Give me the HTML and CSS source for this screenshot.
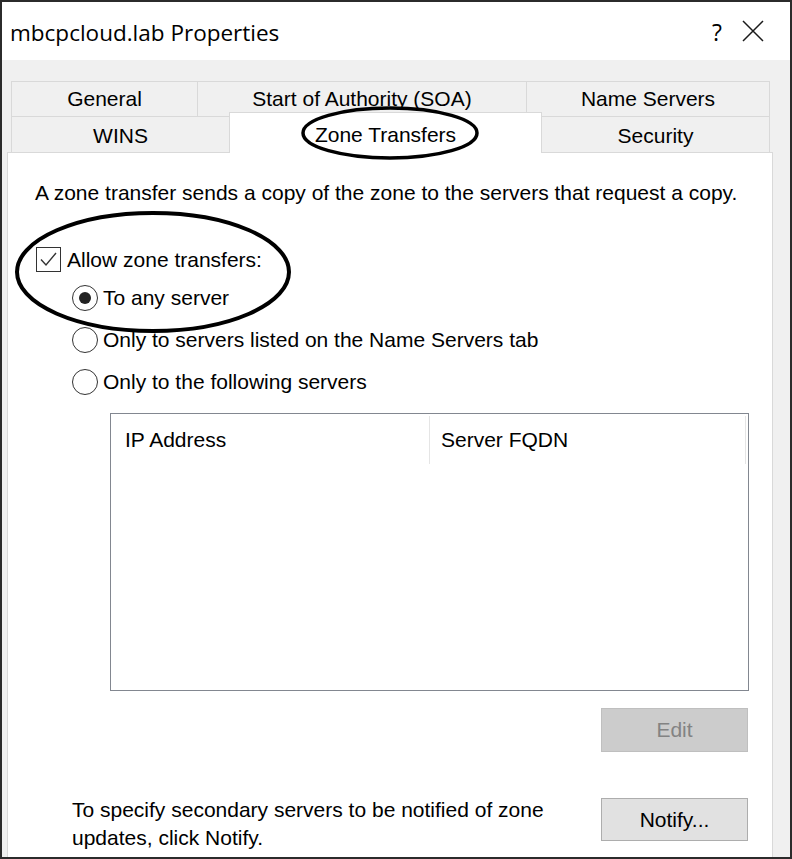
FILE: index.html
```html
<!DOCTYPE html>
<html>
<head>
<meta charset="utf-8">
<title>mbcpcloud.lab Properties</title>
<link rel="stylesheet" href="styles.css">
</head>
<body>
<div class="window">
  <div class="titlebar">
    <span class="title">mbcpcloud.lab Properties</span>
    <span class="help">?</span>
    <svg class="close" width="22" height="22" viewBox="0 0 22 22"><path d="M1 1 L21 21 M21 1 L1 21" stroke="#1a1a1a" stroke-width="1.5" fill="none"/></svg>
  </div>
  <div class="body">
    <div class="tabs">
      <div class="tabrow">
        <div class="tab w-general">General</div>
        <div class="tab w-soa">Start of Authority (SOA)</div>
        <div class="tab w-ns">Name Servers</div>
      </div>
      <div class="tabrow row2">
        <div class="tab w-wins">WINS</div>
        <div class="tab w-zone active">Zone Transfers</div>
        <div class="tab w-sec">Security</div>
      </div>
    </div>
    <div class="panel">
      <p class="intro">A zone transfer sends a copy of the zone to the servers that request a copy.</p>
      <div class="check-row">
        <span class="checkbox"><svg width="23" height="23" viewBox="0 0 23 23"><path d="M4 11.5 L9 17 L19 5" stroke="#333" stroke-width="1.4" fill="none"/></svg></span>
        <span class="label">Allow zone transfers:</span>
      </div>
      <div class="radios">
        <div class="radio-row"><span class="radio checked"></span><span class="label">To any server</span></div>
        <div class="radio-row"><span class="radio"></span><span class="label">Only to servers listed on the Name Servers tab</span></div>
        <div class="radio-row"><span class="radio"></span><span class="label">Only to the following servers</span></div>
      </div>
      <div class="list">
        <div class="list-head">
          <div class="col col-ip">IP Address</div>
          <div class="col col-fqdn">Server FQDN</div>
        </div>
      </div>
      <div class="edit-row">
        <button class="btn disabled">Edit</button>
      </div>
      <div class="notify-row">
        <p class="notify-text">To specify secondary servers to be notified of zone updates, click Notify.</p>
        <button class="btn">Notify...</button>
      </div>
    </div>
  </div>
  <svg class="marks" width="792" height="859" viewBox="0 0 792 859">
    <ellipse cx="390" cy="133" rx="87" ry="25" fill="none" stroke="#000" stroke-width="3.5"/>
    <ellipse cx="153" cy="272" rx="136" ry="59" fill="none" stroke="#000" stroke-width="4"/>
  </svg>
</div>
</body>
</html>
```
FILE: styles.css
```css
* { box-sizing: border-box; }
html, body { margin: 0; padding: 0; background: #ffffff; }
body { font-family: "Liberation Sans", Arial, sans-serif; font-size: 21px; color: #000; }

.window {
  position: relative;
  width: 792px;
  height: 859px;
  border: 2px solid #2b2b2b;
  display: flex;
  flex-direction: column;
  overflow: hidden;
  background: #f0f0f0;
}

.titlebar {
  height: 58px;
  flex: none;
  background: #ffffff;
  display: flex;
  align-items: center;
  padding: 0 26px 0 8px;
}
.title {
  font-family: "Open Sans", "Noto Sans", sans-serif;
  font-size: 22.5px;
  color: #000;
  padding-top: 2px;
}
.help {
  margin-left: auto;
  font-family: "Open Sans", "Noto Sans", sans-serif;
  font-size: 23px;
  padding-top: 1px;
}
.close { margin-left: 20px; }

.body {
  flex: 1;
  display: flex;
  flex-direction: column;
  padding: 21px 0 0 5px;
}

.tabs { margin-left: 4px; }
.tabrow { display: flex; align-items: flex-start; }
.row2 { margin-top: -1px; }
.tab {
  height: 36px;
  border: 1px solid #d9d9d9;
  background: #f0f0f0;
  display: flex;
  align-items: center;
  justify-content: center;
  line-height: 24px;
  white-space: nowrap;
}
.tab + .tab { margin-left: -1px; }
.row2 .tab { height: 37px; padding-top: 2px; }
.w-general { width: 187px; }
.w-soa { width: 330px; }
.w-ns { width: 244px; }
.w-wins { width: 219px; }
.w-zone { width: 313px; }
.w-sec { width: 229px; }
.row2 .tab.active {
  position: relative;
  z-index: 2;
  height: 41px;
  margin-top: -4px;
  border-bottom: none;
  background: #ffffff;
  padding-top: 4px;
}

.panel {
  flex: 1;
  width: 766px;
  margin-top: -1px;
  background: #ffffff;
  border: 1px solid #d9d9d9;
  border-bottom: none;
  padding: 28px 23px 0 27px;
  display: flex;
  flex-direction: column;
}
.intro { margin: 0; line-height: 24px; white-space: nowrap; }
.label { line-height: 24px; white-space: nowrap; }

.check-row { margin-top: 42px; margin-left: 1px; height: 25px; display: flex; align-items: center; }
.checkbox {
  width: 25px; height: 25px;
  border: 1px solid #333333;
  display: flex; align-items: center; justify-content: center;
  margin-right: 6px;
}

.radios { margin-top: 13px; margin-left: 37px; display: flex; flex-direction: column; gap: 16px; }
.radio-row { height: 26px; display: flex; align-items: center; }
.radio {
  width: 26px; height: 26px;
  border: 1.5px solid #333333;
  border-radius: 50%;
  margin-right: 5px;
  display: flex; align-items: center; justify-content: center;
  flex: none;
}
.radio.checked::after {
  content: "";
  width: 12px; height: 12px;
  border-radius: 50%;
  background: #222222;
}

.list {
  margin-top: 18px;
  margin-left: 75px;
  width: 639px;
  height: 278px;
  flex: none;
  border: 1px solid #828790;
  background: #ffffff;
}
.list-head { display: flex; }
.col {
  margin-top: 2px;
  height: 48px;
  display: flex;
  align-items: center;
  border-right: 1px solid #e5e5e5;
  white-space: nowrap;
}
.col-ip { width: 319px; padding-left: 14px; }
.col-fqdn { width: 316px; padding-left: 11px; }

.btn {
  width: 147px;
  height: 44px;
  font-family: "Liberation Sans", Arial, sans-serif;
  font-size: 21px;
  color: #000;
  background: #e1e1e1;
  border: 1px solid #adadad;
  padding: 0;
}
.btn.disabled { background: #cccccc; border-color: #bfbfbf; color: #838383; }

.edit-row { margin-top: 17px; display: flex; justify-content: flex-end; padding-right: 1px; }

.notify-row { margin-top: 46px; display: flex; align-items: flex-start; padding-right: 1px; }
.notify-text { margin: -2px 0 0 37px; width: 500px; line-height: 28px; }
.notify-row .btn { margin-left: auto; height: 43px; }

.marks { position: absolute; left: -2px; top: -2px; pointer-events: none; z-index: 5; }
```
